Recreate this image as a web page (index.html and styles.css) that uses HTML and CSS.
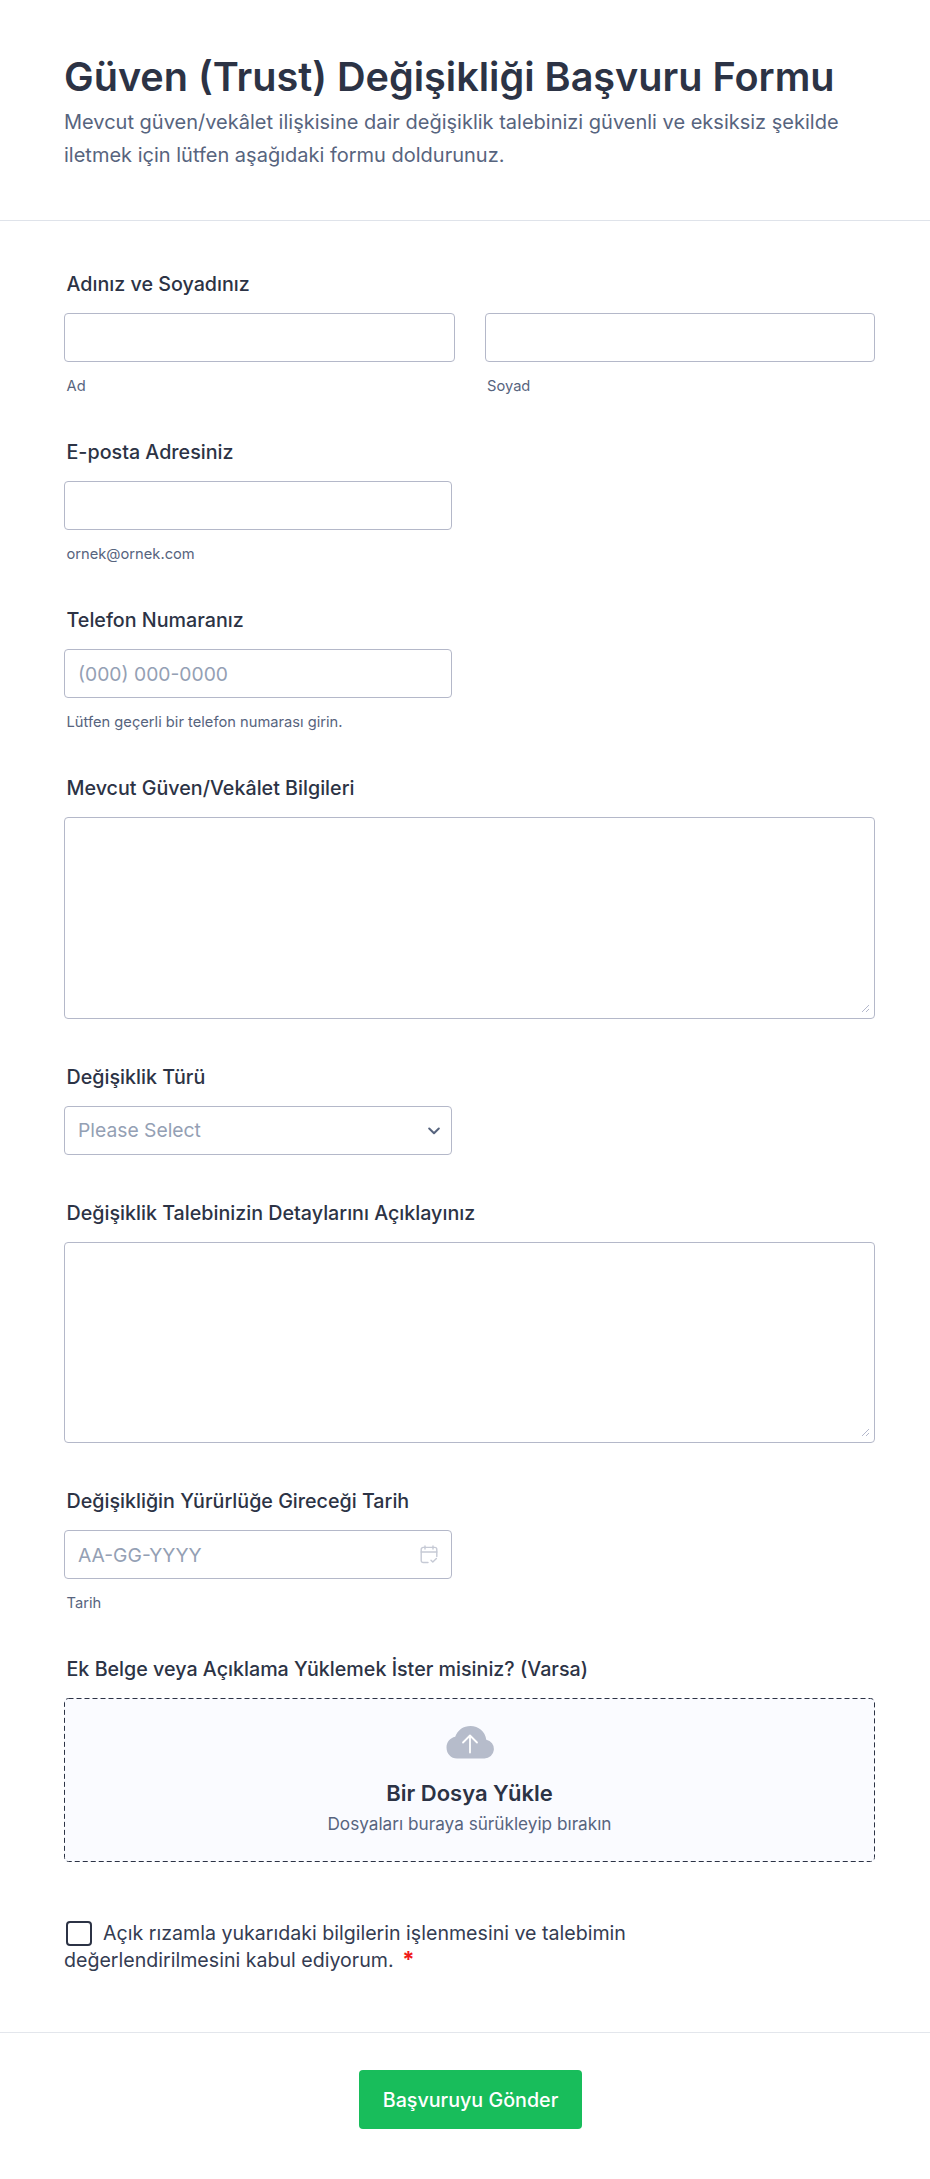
FILE: index.html
```html
<!DOCTYPE html>
<html lang="tr">
<head>
    <meta charset="UTF-8">
    <meta name="viewport" content="width=device-width, initial-scale=1.0">
    <title>Güven (Trust) Değişikliği Başvuru Formu</title>
    <link rel="stylesheet" href="styles.css">
</head>
<body>
    <header class="form-header">
        <h1>Güven (Trust) Değişikliği Başvuru Formu</h1>
        <p>Mevcut güven/vekâlet ilişkisine dair değişiklik talebinizi güvenli ve eksiksiz şekilde iletmek için lütfen aşağıdaki formu doldurunuz.</p>
    </header>

    <form class="form-body">
        <div class="form-group">
            <label class="form-label">Adınız ve Soyadınız</label>
            <div class="name-row">
                <div>
                    <input type="text" class="form-input">
                    <span class="form-hint">Ad</span>
                </div>
                <div>
                    <input type="text" class="form-input">
                    <span class="form-hint">Soyad</span>
                </div>
            </div>
        </div>

        <div class="form-group">
            <label class="form-label">E-posta Adresiniz</label>
            <input type="email" class="form-input short">
            <span class="form-hint">ornek@ornek.com</span>
        </div>

        <div class="form-group">
            <label class="form-label">Telefon Numaranız</label>
            <input type="tel" class="form-input short" placeholder="(000) 000-0000">
            <span class="form-hint">Lütfen geçerli bir telefon numarası girin.</span>
        </div>

        <div class="form-group">
            <label class="form-label">Mevcut Güven/Vekâlet Bilgileri</label>
            <div class="input-wrap">
                <textarea class="form-input form-textarea"></textarea>
                <svg class="grip" width="9" height="9" viewBox="0 0 9 9" fill="none" stroke="#b4b8cc" stroke-width="1">
                    <path d="M1 8L8 1M5 8l3-3"/>
                </svg>
            </div>
        </div>

        <div class="form-group">
            <label class="form-label">Değişiklik Türü</label>
            <div class="input-wrap short">
                <select class="form-input form-select">
                    <option>Please Select</option>
                </select>
                <svg class="select-arrow" width="12" height="8" viewBox="0 0 12 8" fill="none">
                    <path d="M1.2 1.5L6 6.2l4.8-4.7" stroke="#57647e" stroke-width="2" stroke-linecap="round" stroke-linejoin="round"/>
                </svg>
            </div>
        </div>

        <div class="form-group">
            <label class="form-label">Değişiklik Talebinizin Detaylarını Açıklayınız</label>
            <div class="input-wrap">
                <textarea class="form-input form-textarea"></textarea>
                <svg class="grip" width="9" height="9" viewBox="0 0 9 9" fill="none" stroke="#b4b8cc" stroke-width="1">
                    <path d="M1 8L8 1M5 8l3-3"/>
                </svg>
            </div>
        </div>

        <div class="form-group">
            <label class="form-label">Değişikliğin Yürürlüğe Gireceği Tarih</label>
            <div class="input-wrap short">
                <input type="text" class="form-input" placeholder="AA-GG-YYYY">
                <svg class="date-icon" width="18" height="19" viewBox="0 0 18 19" fill="none" stroke="#c6cad5" stroke-width="1.4" stroke-linecap="round" stroke-linejoin="round">
                    <path d="M8 17.500H3.200a2 2 0 0 1-2-2V4.400a2 2 0 0 1 2-2h11.600a2 2 0 0 1 2 2v7"/>
                    <path d="M1.200 7h15.600M5 1v3M13 1v3"/>
                    <path d="M11 15.200l1.800 1.800 3.600-3.600"/>
                </svg>
            </div>
            <span class="form-hint">Tarih</span>
        </div>

        <div class="form-group">
            <label class="form-label">Ek Belge veya Açıklama Yüklemek İster misiniz? (Varsa)</label>
            <div class="upload-box">
                <svg class="upload-border">
                    <rect x="0.5" y="0.5" rx="4" class="upload-dash"/>
                </svg>
                <svg class="upload-icon" width="48" height="34" viewBox="0 0 48 34">
                    <path fill="#b6bccb" d="M11 33.500h27.500a9.500 9.500 0 0 0 1.800-18.800C39.200 6.500 32.500 1 24.500 1 17.500 1 11.500 5 9.200 11.800 4 13 .5 17.200.5 22.500c0 6.300 4.500 11 10.500 11z"/>
                    <path fill="none" stroke="#fff" stroke-width="1.800" stroke-linecap="round" stroke-linejoin="round" d="M24 27.500V11M17 17.500L24 10.500l7 7"/>
                </svg>
                <strong class="upload-title">Bir Dosya Yükle</strong>
                <span class="upload-sub">Dosyaları buraya sürükleyip bırakın</span>
            </div>
        </div>

        <div class="consent">
            <label class="consent-text"><input type="checkbox" class="consent-box">Açık rızamla yukarıdaki bilgilerin işlenmesini ve talebimin değerlendirilmesini kabul ediyorum. <span class="required">*</span></label>
        </div>
    </form>

    <footer class="form-footer">
        <button type="submit" class="submit-btn">Başvuruyu Gönder</button>
    </footer>
</body>
</html>
```

FILE: styles.css
```css
* {
    box-sizing: border-box;
}
body {
    margin: 0;
    font-family: Inter, 'Noto Sans', sans-serif;
    color: #2c3345;
    background: #fff;
}
.form-header {
    height: 221px;
    padding: 52px 64px 0;
    border-bottom: 1px solid #dfe3ea;
}
h1 {
    margin: 0;
    font-size: 39.6px;
    line-height: 50px;
    font-weight: 600;
}
.form-header p {
    margin: 4px 0 0;
    font-size: 20px;
    line-height: 33px;
    color: #57647e;
    max-width: 800px;
}
.form-body {
    padding: 52px 55px 0 64px;
}
.form-group {
    margin-bottom: 47px;
}
.form-label {
    display: block;
    margin: 0 0 18px 2.5px;
    font-size: 19.7px;
    line-height: 22px;
    font-weight: 500;
}
.name-row {
    display: grid;
    grid-template-columns: 1fr 1fr;
    gap: 30px;
}
.form-input {
    display: block;
    width: 100%;
    height: 49px;
    padding: 0 13px;
    background: #fff;
    border: 1px solid #b4b8c9;
    border-radius: 4px;
    font-family: inherit;
    font-size: 19.3px;
    color: #2c3345;
    outline: none;
}
.form-input::placeholder {
    color: #94a0b4;
    opacity: 1;
}
.short {
    width: 388px;
}
.form-hint {
    display: block;
    margin: 16px 0 0 2.5px;
    font-size: 14.7px;
    line-height: 16px;
    color: #57647e;
}
.form-textarea {
    height: 201.5px;
    padding: 12px;
    resize: none;
}
.input-wrap {
    position: relative;
}
.grip {
    position: absolute;
    right: 5px;
    bottom: 6px;
}
.form-select {
    appearance: none;
    color: #94a0b4;
}
.select-arrow {
    position: absolute;
    right: 12px;
    top: 21px;
    pointer-events: none;
}
.date-icon {
    position: absolute;
    right: 14px;
    top: 15px;
    pointer-events: none;
}
.upload-box {
    position: relative;
    display: flex;
    flex-direction: column;
    align-items: center;
    height: 164px;
    padding-top: 27px;
    background: #fafbff;
    border-radius: 4px;
}
.upload-border {
    position: absolute;
    top: 0;
    left: 0;
    width: 100%;
    height: 100%;
}
.upload-dash {
    width: calc(100% - 1px);
    height: calc(100% - 1px);
    fill: none;
    stroke: #2c3345;
    stroke-width: 1;
    stroke-dasharray: 5 3;
}
.upload-icon {
    display: block;
}
.upload-title {
    margin-top: 21px;
    font-size: 22px;
    line-height: 26px;
    font-weight: 600;
}
.upload-sub {
    margin-top: 7px;
    font-size: 17.2px;
    line-height: 22px;
    color: #57647e;
}
.consent {
    padding-top: 11px;
    width: 600px;
}
.consent-text {
    display: block;
    font-size: 19.6px;
    line-height: 27px;
    color: #343c52;
}
.consent-box {
    appearance: none;
    width: 26px;
    height: 25px;
    margin: 0 11px 0 2px;
    vertical-align: -6px;
    background: #fff;
    border: 2px solid #2c3345;
    border-radius: 4px;
}
.required {
    margin-left: 3px;
    color: #f01a1a;
    font-size: 22px;
    line-height: 0;
    font-weight: 700;
}
.form-footer {
    display: flex;
    justify-content: center;
    margin-top: 58px;
    padding: 37px 0 50px 11px;
    border-top: 1px solid #e3e6ec;
}
.submit-btn {
    width: 223px;
    height: 59px;
    border: none;
    border-radius: 4px;
    background: #18bd5b;
    color: #fff;
    font-family: inherit;
    font-size: 19.7px;
    font-weight: 500;
    cursor: pointer;
}
```
